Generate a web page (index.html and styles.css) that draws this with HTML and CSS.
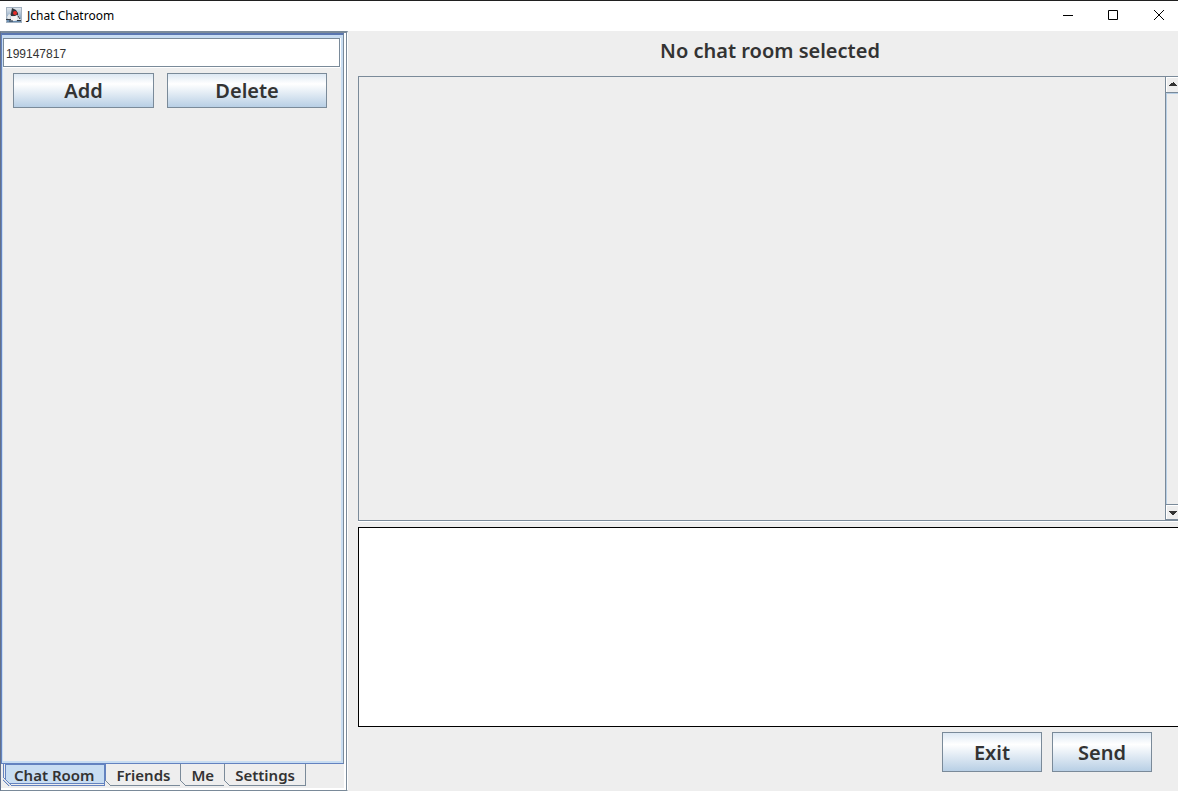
FILE: index.html
```html
<!DOCTYPE html>
<html lang="en">
<head>
<meta charset="utf-8">
<title>Jchat Chatroom</title>
<link rel="stylesheet" href="styles.css">
</head>
<body>
<header class="titlebar">
  <svg class="app-icon" viewBox="0 0 16 16" aria-hidden="true">
    <defs><linearGradient id="tile" x1="0" y1="0" x2="0" y2="1"><stop offset="0" stop-color="#e4e9ee"/><stop offset="1" stop-color="#5f86ad"/></linearGradient></defs>
    <rect x=".5" y=".5" width="15" height="15" fill="url(#tile)" stroke="#a3b1c0"/>
    <path d="M6 1 L10 3 L12 6 L12 9 L4 9 L5 6Z" fill="#30363d"/>
    <path d="M5 9 Q8 10 11 8 L12 13 Q8 15 4 13Z" fill="#f3f3f3"/>
    <path d="M1 10 L3 7 L5 8 L4 12 L2 13Z M11 8 L13 9 L15 13 L12 13Z" fill="#e3e7ea"/>
    <path d="M0 12.500H5 M3 14H7 M12 9 L14 12 M11 13.500H15" stroke="#343b43"/>
    <ellipse cx="9" cy="6" rx="2" ry="2" fill="#e42b28"/>
  </svg>
  <h1 class="window-title">Jchat Chatroom</h1>
  <div class="window-controls">
    <button class="window-button" aria-label="Minimize"><svg viewBox="0 0 11 11"><path d="M1 5.5H11"/></svg></button>
    <button class="window-button" aria-label="Maximize"><svg viewBox="0 0 11 11"><path d="M.5 .5H9.5V9.5H.5Z"/></svg></button>
    <button class="window-button" aria-label="Close"><svg viewBox="0 0 11 11"><path d="M0 0L10 10M10 0L0 10"/></svg></button>
  </div>
</header>
<div class="workspace">
  <aside class="sidebar">
    <section class="tab-panel">
      <input class="room-input" type="text" aria-label="Room number" value="199147817">
      <div class="room-actions">
        <button class="button add">Add</button>
        <button class="button delete">Delete</button>
      </div>
    </section>
    <nav class="tabs" role="tablist">
      <button class="tab selected" role="tab" aria-selected="true">Chat Room</button>
      <button class="tab" role="tab">Friends</button>
      <button class="tab" role="tab">Me</button>
      <button class="tab" role="tab">Settings</button>
    </nav>
  </aside>
  <main class="chat">
    <h2 class="room-title">No chat room selected</h2>
    <section class="history">
      <div class="messages"></div>
      <div class="scrollbar">
        <button class="scroll-button" aria-label="Scroll up"><svg viewBox="0 0 9 5"><path d="M4 0H5V1H6V2H7V3H8V4H0V3H1V2H2V1H4Z"/></svg></button>
        <div class="track"></div>
        <button class="scroll-button down" aria-label="Scroll down"><svg viewBox="0 0 9 5"><path d="M0 1H8V2H7V3H6V4H5V5H3V4H2V3H1V2H0Z"/></svg></button>
      </div>
    </section>
    <textarea class="composer" aria-label="Message"></textarea>
    <div class="chat-actions">
      <button class="button action">Exit</button>
      <button class="button action">Send</button>
    </div>
  </main>
</div>
</body>
</html>
```
FILE: styles.css
```css
* { box-sizing: border-box; }
body {
  margin: 0;
  height: 100vh;
  display: flex;
  flex-direction: column;
  overflow: hidden;
  background: #eee;
  color: #333;
  font-family: "Noto Sans", sans-serif;
}
button, input, textarea { font-family: inherit; color: inherit; border-radius: 0; margin: 0; }
.titlebar {
  flex: 0 0 31px;
  display: flex;
  align-items: center;
  padding-left: 6px;
  gap: 5px;
  border-top: 1px solid #202020;
  background: #fff;
}
.app-icon { width: 16px; height: 16px; margin-bottom: 2px; }
.window-title { margin: 0 0 2px; color: #000; font-size: 12px; font-weight: 400; }
.window-controls { display: flex; margin-left: auto; margin-right: -4px; }
.window-button {
  display: grid;
  place-items: center;
  width: 46px;
  height: 30px;
  padding: 0 0 2px;
  border: 0;
  background: none;
}
.window-button svg { width: 11px; height: 11px; fill: none; stroke: #000; }
.workspace {
  flex: 1;
  min-height: 0;
  display: grid;
  grid-template-columns: 348px 1fr;
}
.sidebar {
  display: flex;
  flex-direction: column;
  border-top: 2px solid #7a8a99;
  border-right: 1px solid #fff;
  border-bottom: 1px solid #7a8a99;
  border-left: 1px solid #63708a;
  box-shadow: inset -1px 0 #7a8a99, inset -3px -2px #fff;
}
.tab-panel {
  flex: 1;
  margin-right: 3px;
  border: 1px solid #6382bf;
  border-top: 2px solid #5a76b0;
  border-right-color: #7a8a99;
  box-shadow: inset 1px 3px #c8ddf2, inset -2px -2px #c8ddf2;
  padding: 3px 3px 2px 1px;
}
.room-input {
  display: block;
  width: 100%;
  height: 29px;
  padding: 2px 2px 0;
  border: 1px solid #7a8a99;
  background: #fff;
  box-shadow: 0 1px #fff, 1px 0 #fff;
  font-family: "Liberation Sans", sans-serif;
  font-size: 12px;
}
.room-actions { display: flex; gap: 13px; padding: 6px 13px 0 10px; }
.button {
  height: 35px;
  padding: 1px 0 0;
  border: 1px solid #7a8a99;
  background: linear-gradient(#dde8f3, #fff 30%, #b8cfe5);
  font-size: 20px;
  font-weight: 600;
  line-height: 24px;
}
.add { flex: 141; }
.delete { flex: 160; }
.tabs { display: flex; height: 26px; padding-left: 4px; }
.tab {
  position: relative;
  height: 22px;
  padding: 0 10px;
  border: 1px solid #7a8a99;
  border-top: 0;
  border-left: 0;
  background: #eee;
  font-size: 15px;
  font-weight: 600;
  line-height: 20px;
}
.tab::before {
  content: "";
  position: absolute;
  left: -1px;
  bottom: -1px;
  width: 6px;
  height: 6px;
  background: linear-gradient(45deg, #eee 42%, #7a8a99 43% 57%, transparent 58%);
}
.selected {
  padding: 0 10px 0 8px;
  border: 1px solid #6382bf;
  border-top: 0;
  border-right-width: 2px;
  background: #c8ddf2;
  box-shadow: -1px 0 #eee, -2px 0 #6382bf, inset 0 1px #6382bf, inset 0 -1px #eee, inset 0 -2px #6382bf;
}
.selected::before {
  left: -3px;
  width: 8px;
  height: 8px;
  background: linear-gradient(45deg, #eee 34%, #6382bf 35% 43%, #eee 44% 50%, #6382bf 51% 59%, transparent 60%);
}
.chat {
  display: flex;
  flex-direction: column;
  min-width: 0;
  margin-right: -4px;
  padding-left: 10px;
}
.room-title {
  margin: 0;
  height: 45px;
  padding-top: 6px;
  text-align: center;
  font-size: 20px;
  font-weight: 600;
  line-height: 28px;
}
.history {
  flex: 1;
  display: flex;
  min-height: 0;
  border: 1px solid #7a8a99;
  box-shadow: 0 1px #fff;
}
.messages { flex: 1; }
.scrollbar {
  display: flex;
  flex-direction: column;
  width: 16px;
  border-left: 1px solid #7a8a99;
}
.scroll-button {
  display: grid;
  place-items: center;
  height: 16px;
  padding: 0;
  border: 0;
  border-bottom: 1px solid #7a8a99;
  background: #eee;
  box-shadow: inset 1px 1px #fff;
}
.scroll-button svg { width: 9px; height: 5px; fill: #333; }
.down { border-top: 1px solid #7a8a99; }
.track { flex: 1; border-left: 1px solid #b8cfe5; border-top: 1px solid #b8cfe5; }
.composer {
  display: block;
  height: 200px;
  margin-top: 6px;
  border: 1px solid #000;
  background: #fff;
  resize: none;
  font-size: 14px;
}
.chat-actions { display: flex; justify-content: flex-end; gap: 10px; height: 64px; padding: 5px 30px 0 0; }
.action { width: 100px; height: 40px; }
```
